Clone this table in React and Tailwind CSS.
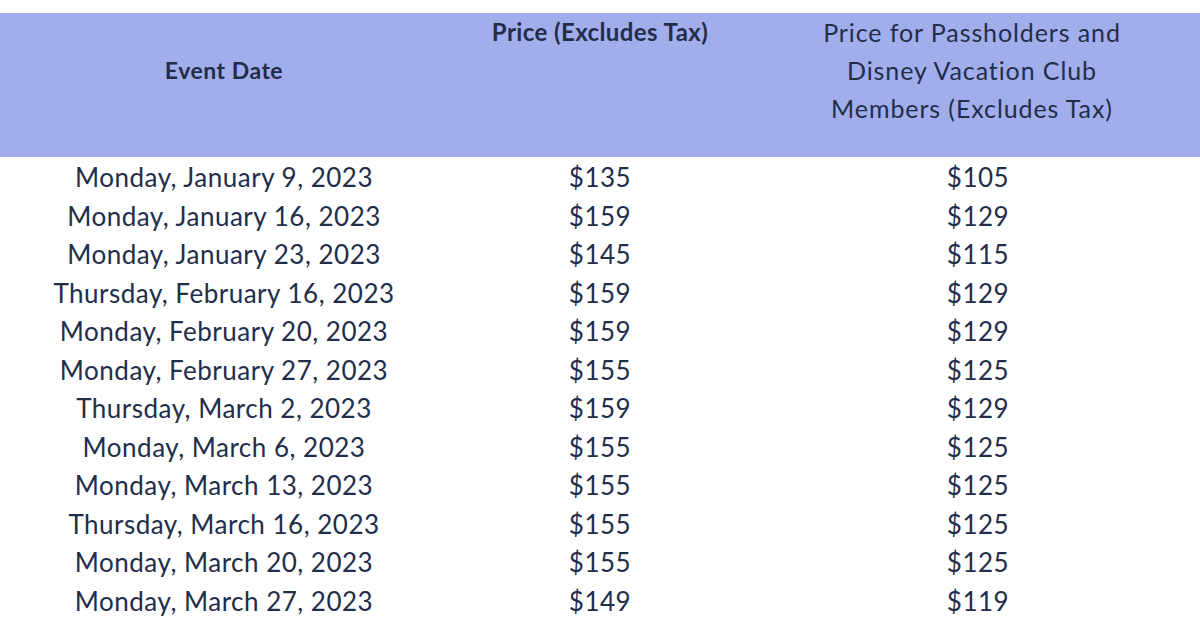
import React from 'react';

const rows = [
  ['Monday, January 9, 2023', '$135', '$105'],
  ['Monday, January 16, 2023', '$159', '$129'],
  ['Monday, January 23, 2023', '$145', '$115'],
  ['Thursday, February 16, 2023', '$159', '$129'],
  ['Monday, February 20, 2023', '$159', '$129'],
  ['Monday, February 27, 2023', '$155', '$125'],
  ['Thursday, March 2, 2023', '$159', '$129'],
  ['Monday, March 6, 2023', '$155', '$125'],
  ['Monday, March 13, 2023', '$155', '$125'],
  ['Thursday, March 16, 2023', '$155', '$125'],
  ['Monday, March 20, 2023', '$155', '$125'],
  ['Monday, March 27, 2023', '$149', '$119'],
];

export default function App() {
  return (
    <div className="w-[1200px] h-[630px] bg-white overflow-hidden pt-[13px] text-[#222d4a] font-['Lato',sans-serif]">
      {/* Header */}
      <div className="grid grid-cols-[448px_304px_448px] bg-[#a2adec] h-[144px]">
        <div className="flex items-center justify-center h-[114px] text-[23px] font-bold tracking-[0.5px]">
          Event Date
        </div>
        <div className="text-center text-[24px] leading-[38px] font-bold tracking-[0.4px]">
          Price (Excludes Tax)
        </div>
        <div className="text-center text-[25px] leading-[38px] tracking-[0.9px] pr-[8px]">
          Price for Passholders and
          <br />
          Disney Vacation Club
          <br />
          Members (Excludes Tax)
        </div>
      </div>

      {/* Body */}
      <div className="pt-[1px]">
        {rows.map(([date, price, pass]) => (
          <div
            key={date}
            className="grid grid-cols-[448px_304px_448px] h-[38.5px] items-center text-[26px] leading-none tracking-[0.5px]"
          >
            <div className="text-center">{date}</div>
            <div className="text-center">{price}</div>
            <div className="text-center pl-[4px]">{pass}</div>
          </div>
        ))}
      </div>
    </div>
  );
}
